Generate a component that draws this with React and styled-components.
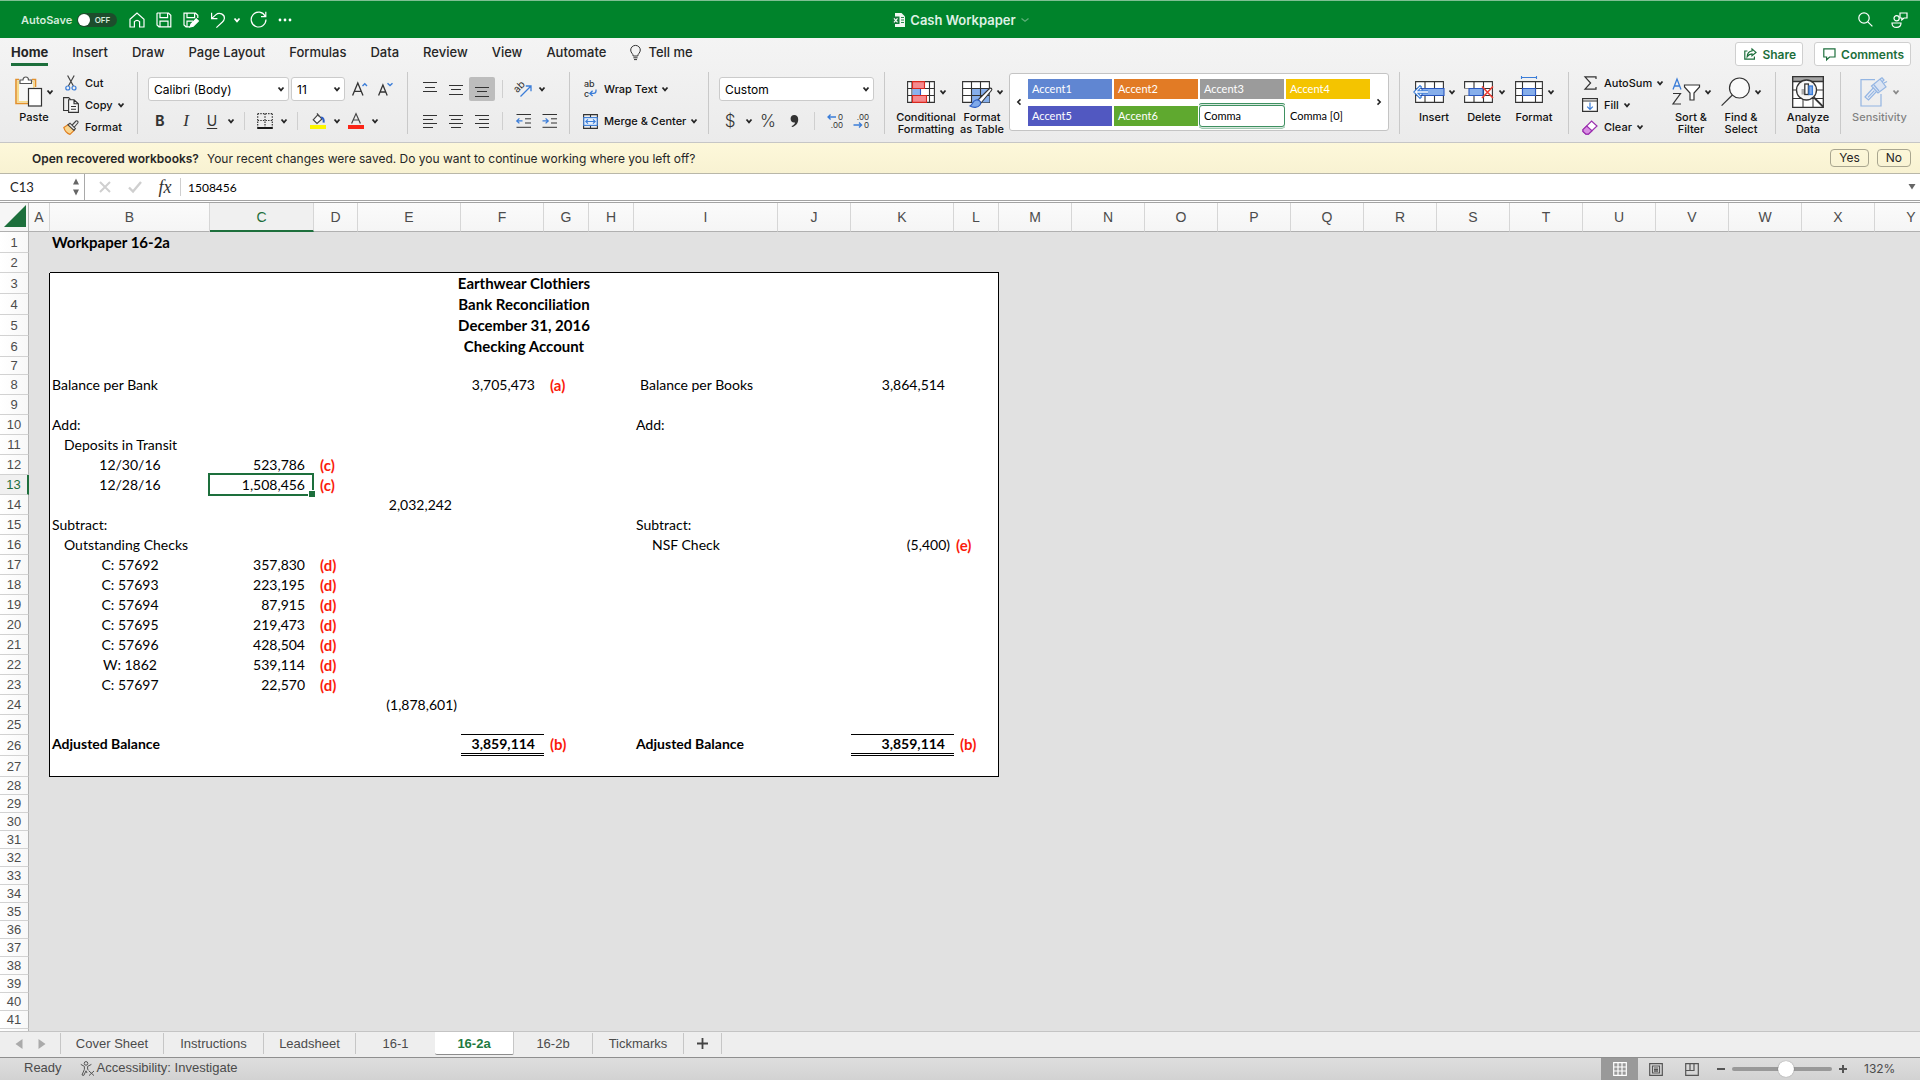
import React from "react";
import styled, { createGlobalStyle } from "styled-components";

const ui = `Inter, Roboto, sans-serif`;
const sheetFont = `Lato, "Open Sans", sans-serif`;
const arial = `"Liberation Sans", Arial, sans-serif`;
const green = "#1d6f3c";
const ink = "#262626";
const blue = "#3b7dd8";

const Global = createGlobalStyle`
  * { box-sizing: border-box; }
  html, body { margin: 0; padding: 0; }
  body { background: #e1e1e1; font-family: ${ui}; color: ${ink}; overflow: hidden; }
  button, input, select { font: inherit; color: inherit; margin: 0; padding: 0; border: 0; background: none; border-radius: 0; outline: 0; }
  svg { display: block; flex: none; overflow: visible; }
`;

const Window = styled.div`
  display: flex;
  flex-direction: column;
  height: 100vh;
  overflow: hidden;
`;

/* ---------- title bar ---------- */
const TitleBar = styled.header`
  flex: none;
  display: grid;
  grid-template-columns: 1fr auto 1fr;
  align-items: center;
  height: 38px;
  padding: 0 12px 0 21px;
  background: #00832b;
  border-top: 1px solid #7fbf93;
  color: #fff;
`;
const TitleSide = styled.div`
  display: flex;
  align-items: center;
  justify-content: ${(p) => (p.$end ? "flex-end" : "flex-start")};
  gap: ${(p) => (p.$end ? "16px" : "9px")};
`;
const AutoSave = styled.label`
  position: relative;
  display: flex;
  align-items: center;
  gap: 5px;
  margin-right: 2px;
  font-size: 11px;
  font-weight: 600;
  color: #d5ecdc;
`;
const Toggle = styled.input`
  appearance: none;
  width: 40px;
  height: 14px;
  border-radius: 7px;
  background: #1d4d2c;
  &::before {
    content: "";
    display: block;
    width: 12px;
    height: 12px;
    margin: 1px;
    border-radius: 50%;
    background: #fff;
  }
`;
const ToggleText = styled.span`
  position: absolute;
  right: 7px;
  font-size: 8px;
  line-height: 14px;
  font-weight: 600;
`;
const BarButton = styled.button`
  display: flex;
  align-items: center;
  justify-content: center;
  width: 18px;
  height: 20px;
`;
const UndoGroup = styled.div`
  display: flex;
  align-items: center;
  gap: 7px;
`;
const UndoMore = styled(BarButton)`
  width: 6px;
`;
const DocTitle = styled.h1`
  display: flex;
  align-items: center;
  gap: 5px;
  margin: 0 8px 0 0;
  font-size: 13px;
  line-height: 18px;
  font-weight: 600;
  color: #dff1e4;
`;

/* ---------- ribbon ---------- */
const RibbonShell = styled.section`
  flex: none;
  background: linear-gradient(#f4f4f4, #ebebeb);
  border-bottom: 1px solid #c6c6c6;
`;
const TabRow = styled.nav`
  display: flex;
  align-items: flex-start;
  height: 34px;
  padding: 4px 9px 0 11px;
  gap: 24px;
`;
const RibbonTab = styled.button`
  display: flex;
  align-items: center;
  gap: 7px;
  height: 24px;
  padding-bottom: 1px;
  font-size: 13px;
  font-weight: ${(p) => (p.$on ? 700 : 500)};
  border-bottom: 3px solid ${(p) => (p.$on ? green : "transparent")};
  white-space: nowrap;
`;
const Spacer = styled.div`
  flex: 1;
`;
const Pills = styled.div`
  display: flex;
  gap: 11px;
`;
const PillButton = styled.button`
  display: flex;
  align-items: center;
  gap: 5px;
  height: 24px;
  padding: 0 6px 0 8px;
  border: 1px solid #cfcfcf;
  border-radius: 3px;
  background: #fff;
  color: ${green};
  font-size: 12px;
  font-weight: 600;
`;
const Ribbon = styled.div`
  display: flex;
  align-items: flex-start;
  height: 70px;
`;
const Group = styled.div`
  flex: none;
  display: flex;
  flex-direction: ${(p) => (p.$stack ? "column" : "row")};
  width: ${(p) => p.$w}px;
  height: 70px;
  padding-left: ${(p) => p.$pl || 0}px;
  gap: ${(p) => p.$gap || 0}px;
  ${(p) => (p.$stack ? "padding-top: 5px; gap: 8px;" : "")}
`;
const Sep = styled.div`
  flex: none;
  width: 1px;
  height: 62px;
  background: #c9c9c9;
`;
const MiniSep = styled.div`
  flex: none;
  width: 1px;
  height: 18px;
  margin: 0 7px;
  background: #cfcfcf;
`;
const Row = styled.div`
  display: flex;
  align-items: center;
  height: 24px;
  padding-left: ${(p) => p.$inset || 0}px;
`;
const Tool = styled.button`
  flex: none;
  display: flex;
  align-items: center;
  justify-content: center;
  width: 26px;
  height: 24px;
  border-radius: 2px;
  font-size: 14px;
  background: ${(p) => (p.$on ? "#bdbdbd" : "none")};
`;
const ChevBox = styled.button`
  flex: none;
  display: flex;
  align-items: center;
  justify-content: center;
  width: 12px;
  height: 24px;
`;
const SelectBox = styled.div`
  position: relative;
  flex: none;
  width: ${(p) => p.$w}px;
  height: 24px;
  margin-right: 2px;
  border: 1px solid #cbcbcb;
  border-radius: 3px;
  background: #fff;
  select {
    appearance: none;
    width: 100%;
    height: 22px;
    padding: 0 20px 0 5px;
    font-size: 12px;
    color: #000;
  }
  svg {
    position: absolute;
    right: 4px;
    top: 9px;
    pointer-events: none;
  }
`;
const SmallCol = styled.div`
  display: flex;
  flex-direction: column;
  width: ${(p) => p.$w}px;
`;
const SmallButton = styled.button`
  display: flex;
  align-items: center;
  height: ${(p) => p.$h || 22}px;
  gap: 1px;
  font-size: 11px;
  font-weight: 500;
  color: #111;
  white-space: nowrap;
  > svg:last-child { margin-left: 4px; }
`;
const IconSlot = styled.span`
  flex: none;
  display: flex;
  align-items: center;
  justify-content: center;
  width: 26px;
`;
const BigButton = styled.button`
  flex: none;
  display: flex;
  flex-direction: column;
  align-items: center;
  width: ${(p) => p.$w}px;
  height: 64px;
  padding-top: 2px;
  font-size: 11px;
  line-height: 12px;
  font-weight: 500;
  color: #111;
  opacity: ${(p) => (p.$dim ? 0.5 : 1)};
  white-space: nowrap;
`;
const BigIcon = styled.span`
  display: flex;
  align-items: center;
  justify-content: center;
  gap: 5px;
  height: 35px;
  margin-bottom: 2px;
`;
const Gallery = styled.div`
  flex: 1;
  display: flex;
  align-items: center;
  height: 58px;
  margin: 1px 10px 0 4px;
  border: 1px solid #c4c4c4;
  border-radius: 3px;
  background: #fff;
`;
const GalleryArrow = styled.button`
  flex: none;
  display: flex;
  align-items: center;
  justify-content: center;
  width: 18px;
  height: 56px;
`;
const Swatches = styled.div`
  flex: 1;
  display: grid;
  grid-template-columns: repeat(4, 1fr);
  gap: 7px 2px;
`;
const Swatch = styled.button`
  height: 20px;
  padding-left: 4px;
  text-align: left;
  font-family: ${sheetFont};
  font-size: 11px;
  color: ${(p) => (p.$bg ? "#fff" : "#000")};
  background: ${(p) => p.$bg || "#fff"};
  ${(p) =>
    p.$on
      ? "border-radius: 2px; box-shadow: 0 0 0 2px #d9e8df, 0 0 0 3px #3f9161; clip-path: inset(-4px -1px -3px -1px round 3px); outline: 1px solid #3f9161;"
      : ""}
`;

/* ---------- recovery message ---------- */
const Notice = styled.section`
  flex: none;
  display: flex;
  align-items: center;
  gap: 8px;
  height: 31px;
  padding: 0 9px 0 32px;
  background: linear-gradient(#fdf8da, #f8f2d2);
  border-bottom: 1px solid #b9b7a8;
  font-size: 12px;
`;
const NoticeTitle = styled.strong`
  font-weight: 600;
`;
const NoticeButton = styled.button`
  height: 18px;
  padding: 0 8px;
  border: 1px solid #a9a68f;
  border-radius: 4px;
  line-height: 16px;
`;

/* ---------- formula bar ---------- */
const FormulaBar = styled.section`
  flex: none;
  display: flex;
  align-items: center;
  height: 29px;
  background: #fff;
  border-bottom: 3px double #a3a3a3;
  font-family: ${sheetFont};
`;
const NameBox = styled.div`
  display: flex;
  align-items: center;
  width: 85px;
  height: 26px;
  padding: 0 4px 0 10px;
  border-right: 1px solid #a9a9a9;
  input { flex: 1; width: 40px; font-size: 13px; color: #222; }
`;
const FormulaIcons = styled.div`
  display: flex;
  align-items: center;
  gap: 2px;
  width: 96px;
  height: 18px;
  margin-right: 7px;
  padding-left: 6px;
  border-right: 1px solid #cfcfcf;
`;
const FormulaIcon = styled.button`
  flex: none;
  display: flex;
  align-items: center;
  justify-content: center;
  width: 28px;
  height: 24px;
`;
const ExpandButton = styled(FormulaIcon)`
  width: 16px;
`;
const FormulaInput = styled.input`
  flex: 1;
  height: 24px;
  font-size: 12px;
  color: #000;
`;

/* ---------- grid ---------- */
const SheetArea = styled.main`
  flex: 1;
  min-height: 0;
  overflow: hidden;
  background: #e1e1e1;
`;
const Grid = styled.table`
  table-layout: fixed;
  width: ${(p) => p.$w}px;
  border-collapse: separate;
  border-spacing: 0;
`;
const Corner = styled.th`
  height: 29px;
  padding: 0 2px 2px 4px;
  background: #f6f6f6;
  border-right: 1px solid #b4b4b4;
  border-bottom: 1px solid #b0b0b0;
`;
const ColHead = styled.th`
  height: 29px;
  padding: 0;
  font-family: ${arial};
  font-size: 14px;
  line-height: 16px;
  font-weight: 400;
  color: ${(p) => (p.$on ? green : "#4c4c4c")};
  background: ${(p) => (p.$on ? "#f0f0f0" : "linear-gradient(#fbfbfb, #f5f5f5)")};
  border-right: 1px solid #d6d6d6;
  border-bottom: ${(p) => (p.$on ? `2px solid ${green}` : "1px solid #b0b0b0")};
`;
const RowHead = styled.th`
  padding: ${(p) => (p.$tall ? 2 : 0)}px 0 0;
  font-family: ${arial};
  font-size: 13px;
  line-height: 14px;
  font-weight: 400;
  color: ${(p) => (p.$on ? green : "#4c4c4c")};
  background: ${(p) => (p.$on ? "#f0f0f0" : "linear-gradient(90deg, #fff, #f8f8f8)")};
  border-right: ${(p) => (p.$on ? `2px solid ${green}` : "1px solid #b4b4b4")};
  border-bottom: 1px solid #d2d2d2;
`;
const Line = styled.tr`
  height: ${(p) => p.$h}px;
`;
const Cell = styled.td`
  padding: 0 ${(p) => p.$pr || 0}px ${(p) => p.$pb || 0}px ${(p) => p.$pl || 0}px;
  font-family: ${sheetFont};
  font-size: ${(p) => (p.$big ? 15 : 14)}px;
  line-height: 16px;
  text-align: ${(p) => p.$align || "left"};
  font-weight: ${(p) => (p.$bold ? 700 : 400)};
  font-variant-ligatures: none;
  color: ${(p) => (p.$tick ? "#fb1b0c" : "#000")};
  white-space: nowrap;
  background: ${(p) => (p.$paper ? "#fff" : "#e1e1e1")};
  ${(p) => (p.$edgeR ? "border-right: 1px solid #000;" : "")}
  ${(p) => (p.$edgeB ? "border-bottom: 1px solid #000;" : "")}
`;
const EdgeTop = styled(Cell)`
  border-bottom: 1px solid #000;
`;
const EdgeLeft = styled(Cell)`
  border-right: 1px solid #000;
`;
const TotalCell = styled(Cell)`
  padding-bottom: 0;
  border-bottom: 3px double #000;
`;
const RuleCell = styled(Cell)`
  border-bottom: 1px solid #000;
`;
const Selected = styled(Cell)`
  position: relative;
  &::before {
    content: "";
    position: absolute;
    inset: -2px 0 -1px -2px;
    border: 2px solid ${green};
  }
  &::after {
    content: "";
    position: absolute;
    right: -1px;
    bottom: -2px;
    width: 6px;
    height: 6px;
    background: ${green};
    border: solid #fff;
    border-width: 1px 0 0 1px;
  }
`;

/* ---------- sheet tabs and status bar ---------- */
const SheetTabs = styled.nav`
  flex: none;
  display: flex;
  height: 26px;
  background: #eee;
  border-top: 1px solid #c4c4c4;
`;
const TabArrows = styled.div`
  display: flex;
  align-items: center;
  justify-content: center;
  gap: 15px;
  width: 61px;
  height: 21px;
  margin-top: 1px;
  border-right: 1px solid #c6c6c6;
`;
const SheetTab = styled.button`
  height: ${(p) => (p.$on ? 23 : 21)}px;
  margin-top: ${(p) => (p.$on ? 0 : 1)}px;
  min-width: ${(p) => p.$w}px;
  padding: 0 12px;
  font-family: ${arial};
  font-size: 13px;
  line-height: 21px;
  font-weight: ${(p) => (p.$on ? 700 : 400)};
  color: ${(p) => (p.$on ? "#1f7a41" : "#4b4b4b")};
  background: ${(p) => (p.$on ? "#fff" : "none")};
  border-right: 1px solid #c6c6c6;
  ${(p) => (p.$on ? "border-bottom: 1px solid #8d8d8d; border-radius: 0 0 2px 2px; margin-left: -1px;" : "")}
  svg { margin: 0 auto; }
`;
const StatusBar = styled.footer`
  flex: none;
  display: flex;
  align-items: center;
  height: 23px;
  padding: 0 24px;
  background: linear-gradient(#dedede, #d2d2d2);
  border-top: 1px solid #8f8f8f;
  font-family: ${arial};
  font-size: 13px;
  line-height: 14px;
  color: #4b4b4b;
`;
const StatusText = styled.div`
  display: flex;
  align-items: center;
  gap: 18px;
  padding-bottom: 2px;
`;
const StatusItem = styled.button`
  display: flex;
  align-items: center;
  gap: 2px;
`;
const ViewButton = styled.button`
  display: flex;
  align-items: center;
  justify-content: center;
  width: ${(p) => (p.$on ? 37 : 36)}px;
  height: 22px;
  color: ${(p) => (p.$on ? "#fff" : "#555")};
  background: ${(p) => (p.$on ? "#999" : "none")};
`;
const ZoomButton = styled.button`
  display: flex;
  align-items: center;
  justify-content: center;
  width: 22px;
  height: 22px;
`;
const Zoom = styled.input`
  appearance: none;
  width: 100px;
  height: 4px;
  border-radius: 2px;
  background: #999;
  &::-webkit-slider-thumb {
    appearance: none;
    width: 16px;
    height: 16px;
    border-radius: 50%;
    background: #fff;
    box-shadow: 0 0 1px rgba(0, 0, 0, 0.5);
  }
`;
const ZoomValue = styled.output`
  width: 42px;
  padding-left: 10px;
  font-family: ${ui};
  font-size: 12px;
`;

/* ---------- icons ---------- */
const Svg = ({ w, h, children, s = "currentColor", sw = 1.2, ...r }) => (
  <svg width={w} height={h} viewBox={`0 0 ${w} ${h}`} fill="none" stroke={s} strokeWidth={sw} aria-hidden="true" {...r}>
    {children}
  </svg>
);
const Chev = ({ c = "#262626", w = 6, sw = 1.8 }) => (
  <Svg w={w} h={4} s={c} sw={sw}><path d={`M.5 .5 L${w / 2} 3.3 L${w - 0.5} .5`} /></Svg>
);
const HomeI = () => <Svg w={16} h={16}><path d="M1 7.2 L8 1 L15 7.2 V15 H10.6 V9.6 Q8 7 5.4 9.6 V15 H1 Z" /></Svg>;
const SaveI = () => <Svg w={16} h={16}><path d="M1.5 1 H12.5 L14.8 3.3 V14.8 H3 L1 13 V1.5 Z M4 1 V5.6 H11.6 V1 M4 14.8 V9.2 H12 V14.8" /></Svg>;
const SaveEditI = () => <Svg w={16} h={16}><path d="M7 14.8 H3 L1 13 V1.2 H12.5 L14.8 3.3 V6 M4 1 V5.6 H11.6 V1 M4 14.8 V9.2 H10" /><path d="M7 15 L8 12 L13.2 6.8 L15.4 9 L10.2 14.2 Z" fill="#fff" /></Svg>;
const UndoI = () => <Svg w={16} h={16}><path d="M1.6 .8 V6.6 H7.4 M1.8 6.4 L6 2.6 C9.4 -.4 14.8 2.4 14.4 6.4 C14.2 8 13.4 9 12.4 10 L6.4 15.6" /></Svg>;
const RedoI = () => <Svg w={17} h={17}><path d="M15.2 5.2 A7.4 7.4 0 1 0 16 8.6 M15.8 .8 V5.6 H11" /></Svg>;
const DotsI = () => <Svg w={14} h={4} s="none"><g fill="#fff"><circle cx="2" cy="2" r="1.4" /><circle cx="7" cy="2" r="1.4" /><circle cx="12" cy="2" r="1.4" /></g></Svg>;
const XlI = () => (
  <Svg w={13} h={14} s="none"><path d="M3 0 H9.5 L13 3.5 V14 H3 Z" fill="#f1f8f3" /><path d="M9 4.5 h3 M9 7 h3 M9 9.5 h3" stroke="#2a8a4c" /><rect x="0" y="3.5" width="7.5" height="7.5" fill="#157a3a" /><path d="M2 5.3 L5.5 9.3 M5.5 5.3 L2 9.3" stroke="#fff" /></Svg>
);
const SearchI = () => <Svg w={15} h={15}><circle cx="6" cy="6" r="5.2" /><path d="M9.8 9.8 L14.4 14.4" /></Svg>;
const PeopleI = () => <Svg w={17} h={16}><circle cx="5.6" cy="6.2" r="2.6" /><path d="M1 11 H10 C10 14 8.4 15.4 5.5 15.4 C2.6 15.4 1 14 1 11 Z M9 1 H16 V6 H13 L10.8 8 V6 H9 Z" /></Svg>;
const BulbI = () => <Svg w={11} h={15} s="#333" sw={1}><path d="M3.2 11 C3.2 8.6 .7 8 .7 5 A4.8 4.6 0 0 1 10.3 5 C10.3 8 7.8 8.6 7.8 11 Z M3.4 12.8 H7.6 M4 14.6 H7" /></Svg>;
const ShareI = () => <Svg w={13} h={12}><path d="M3.4 3 H.8 V11.2 H10.4 V8.6 M8 1 L12 4.4 L8 7.8 V5.8 C5.6 5.8 4.4 6.8 3.2 8.6 C3.4 5.2 5.2 3.2 8 3 Z" /></Svg>;
const CommentI = () => <Svg w={13} h={13}><path d="M.8 .8 H12 V9 H6.6 L3.6 11.8 V9 H.8 Z" /></Svg>;

const PasteI = () => (
  <Svg w={27} h={31}><path d="M4 3.5 H1 V27.5 H13 M17 3.5 H20.5 V11" stroke="#e3912c" strokeWidth="1.6" /><path d="M2 5 H19.5 V12 H13 V26.5 H2 Z" fill="#f7dc8c" stroke="none" /><rect x="4" y="6" width="14" height="19" fill="#f7f7f7" stroke="none" /><path d="M5 7.5 V4 H8 C8 0 13.5 0 13.5 4 H16.5 V7.5 Z" fill="#fff" stroke="#555" /><rect x="13.5" y="12.5" width="13" height="17.5" fill="#fff" stroke="#333" /></Svg>
);
const CutI = () => <Svg w={12} h={16} s="#444"><path d="M2.6 .5 L8.4 11 M9.2 .5 L3.4 11" /><circle cx="2.8" cy="13" r="2" stroke={blue} /><circle cx="9" cy="13" r="2" stroke={blue} /></Svg>;
const CopyI = () => <Svg w={16} h={16} s="#333" sw={1.1}><path d="M5 13.5 H.6 V.6 H5.6 L8 3" /><path d="M5.6 2.8 H11 L15.4 6.8 V15.4 H5.6 Z M11 2.8 V6.8 H15.4 M8 9.5 H13 M8 12.2 H13" fill="#f8f8f8" /></Svg>;
const BrushI = () => <Svg w={16} h={15} s="#444" sw={1.1}><path d="M.8 7.5 L5 4.8 L11 10.4 L7 14.4 C4.4 13.6 1.8 11 .8 7.5 Z" fill="#f9d58e" stroke="#e07f1f" /><path d="M5 4.8 L7 3.2 L12.4 8.6 L11 10.4 Z M9.2 5 L13 1 C14 .2 15.8 1.8 14.8 3 L11.4 7" fill="#eee" /></Svg>;

const GrowA = ({ d }) => (
  <Svg w={16} h={14} s="none"><path d={d ? "M.6 13.5 L4.9 3 L9.2 13.5 M2 10 H7.8" : "M.6 13.5 L5.8 1 L11 13.5 M2.4 9.4 H9.2"} stroke="#333" strokeWidth="1.3" /><path d={d ? "M9.5 1.2 L12 3.5 L14.5 1.2" : "M10.5 4 L12.8 1.8 L15 4"} stroke={blue} strokeWidth="1.4" /></Svg>
);
const BorderI = () => <Svg w={16} h={16} s="#333"><path d="M.7 .7 H15.3 M.7 .7 V14 M15.3 .7 V14 M8 .7 V14 M.7 7.5 H15.3" strokeDasharray="1.4 1.2" /><path d="M.2 15 H15.8" stroke="#000" strokeWidth="1.8" /></Svg>;
const FillI = () => <Svg w={16} h={16} s="#444"><rect x="0" y="12" width="16" height="4" fill="#fdf600" stroke="none" /><path d="M3.2 6.8 L8 1.6 L12 6 L7 10.4 Z M7 .4 L9 3.4" fill="#fafafa" /><path d="M11 4.5 C13.5 4.5 14 7 13.6 9.6" stroke="#2f5fc4" strokeWidth="2" /></Svg>;
const FontColorI = () => <Svg w={16} h={16} s="#444"><rect x="0" y="12" width="16" height="4" fill="#fb2517" stroke="none" /><path d="M3.6 10.4 L8 .6 L12.4 10.4 M5.2 7 H10.8" /></Svg>;
const Lines = ({ rows }) => (
  <Svg w={15} h={15} s="#333" sw={1}>{rows.map(([x1, x2, y], i) => <path key={i} d={`M${x1} ${y}.5 H${x2}`} />)}</Svg>
);
const OrientI = () => <Svg w={17} h={17} s="none"><text x="0" y="9" transform="rotate(-45 5 8)" fontSize="10" fontFamily="Inter" fill="#333">ab</text><path d="M5.5 15.5 L15.5 5.5 M10.8 5 H16 V10.2" stroke={blue} strokeWidth="1.3" /></Svg>;
const Indent = ({ flip }) => (
  <Svg w={15} h={14} s="#333" sw={1}><path d="M.5 .5 H15 M9 4.8 H15 M9 9 H15 M.5 13.3 H15" /><path d={flip ? "M.5 6.9 H6 M3.6 4.4 L6.2 6.9 L3.6 9.4" : "M6.5 6.9 H1 M3.4 4.4 L.8 6.9 L3.4 9.4"} stroke={blue} strokeWidth="1.3" /></Svg>
);
const WrapI = () => (
  <Svg w={15} h={16} s="none">
    <g fontSize="9" fontFamily="Inter" fill="#333"><text x="1" y="6">ab</text><text x="1" y="16">c</text></g>
    <path d="M13 8.5 V10 Q13 12.4 10.6 12.4 H7 M9.6 9.8 L6.8 12.4 L9.6 15" stroke={blue} strokeWidth="1.3" />
  </Svg>
);
const MergeI = () => <Svg w={15} h={15} s="#333" sw={1.1}><path d="M.6 .6 H14.4 V14.4 H.6 Z M7.5 .6 V3.5 M7.5 11.5 V14.4" /><rect x=".8" y="3.6" width="13.4" height="7.8" fill="#e3eefc" stroke={blue} /><path d="M3 7.5 H12 M5 5.4 L2.8 7.5 L5 9.6 M10 5.4 L12.2 7.5 L10 9.6" stroke={blue} /></Svg>;
const Glyph = styled.span`
  font-size: ${(p) => p.$s}px;
  line-height: 20px;
  font-weight: ${(p) => p.$wt || 300};
  font-style: ${(p) => (p.$i ? "italic" : "normal")};
  font-family: ${(p) => (p.$serif ? `"Liberation Serif", serif` : ui)};
  text-decoration: ${(p) => (p.$u ? "underline" : "none")};
  text-underline-offset: 2px;
  color: #333;
`;
const CommaI = () => <Svg w={9} h={12} s="none"><path d="M4.2 0 C6.8 0 8.2 1.8 8.2 4.4 C8.2 8.4 5.6 11 2 12 L1.6 11 C3.6 10.2 4.8 9 5 7.4 C2.4 8 .6 6.2 .6 3.8 C.6 1.6 2 0 4.2 0 Z" fill="#333" /></Svg>;
const DecI = ({ less }) => (
  <Svg w={16} h={16} s="none">
    <text x="16" y="7" textAnchor="end" fontSize="8" fontFamily="Inter" fill="#333">{less ? ".00" : "0"}</text>
    <text x="16" y="15" textAnchor="end" fontSize="8" fontFamily="Inter" fill="#333">{less ? "0" : ".00"}</text>
    <path d={less ? "M.5 12 H8.5 M6 9.5 L8.6 12 L6 14.5" : "M9 4 H1 M3.6 1.5 L1 4 L3.6 6.5"} stroke={blue} strokeWidth="1.3" />
  </Svg>
);
const CondI = () => <Svg w={28} h={22} s="#333" sw={1.1}><path d="M.6 .6 H27.4 V21.4 H.6 Z M5 .6 V21.4 M22.5 .6 V21.4 M.6 7.5 H27.4 M.6 14.5 H27.4" fill="#fff" /><path d="M5.5 .6 H17.5 V7.5 H5.5 Z M5.5 14.5 H19.5 V21.4 H5.5 Z" fill="#f58a8f" stroke="#d9281e" /><path d="M5.5 8 H13.5 V14 H5.5 Z" fill="#8ab2ee" stroke="none" /><path d="M13.5 8 V14" stroke="#2a58c0" /></Svg>;
const FmtTableI = () => <Svg w={30} h={28} s="#333" sw={1.1}><path d="M.6 3.6 H27.4 V24.4 H.6 Z" fill="#fff" /><path d="M10 10.5 H27.4 V24.4 H10 Z" fill="#86aeea" stroke="none" /><path d="M.6 10.5 H27.4 M.6 17.5 H27.4 M9.5 3.6 V24.4 M18.5 3.6 V24.4" /><path d="M16 22 L27 11 C29 9 31 11 29 13 L19 25 Z" fill="#fff" /><path d="M8 28 C11 27 10 23 14 22 C17 21.5 20 24 18 27 C16 30 11 30 8 28 Z" fill="#7fa9ea" stroke="#2f5fc4" /></Svg>;
const GridBase = () => <path d="M2.6 5.6 H30.4 V26.4 H2.6 Z M2.6 12.5 H30.4 M2.6 19.5 H30.4 M12 5.6 V26.4 M21.5 5.6 V26.4" fill="#fff" />;
const InsertI = () => <Svg w={31} h={32} s="#333" sw={1.1}><GridBase /><path d="M9 12.5 H31 V19.5 H9 Z" fill="#86aeea" stroke="#2a58c0" /><path d="M15 14.8 H5 L8.5 11 L7 9.6 L.8 16 L7 22.4 L8.5 21 L5 17.2 H15" fill="#fff" stroke={blue} /></Svg>;
const DeleteI = () => <Svg w={30} h={32} s="#333" sw={1.1}><g transform="translate(-2 0)"><GridBase /></g><path d="M0 12.5 V19.5 H5 V12.5 Z" fill="#eee" stroke="none" /><path d="M5 12.5 H19 V19.5 H5 Z" fill="#86aeea" stroke="#2a58c0" /><path d="M18 10.5 L29 22 M29 10.5 L18 22" stroke="#ee4035" strokeWidth="1.6" /></Svg>;
const FormatI = () => <Svg w={28} h={32} s="#333" sw={1.1}><path d="M.6 5.6 H27.4 V26.4 H.6 Z M.6 12.5 H27.4 M.6 19.5 H27.4 M7.5 5.6 V26.4 M20.5 5.6 V26.4" fill="#fff" /><path d="M7.5 12.5 H20.5 V19.5 H7.5 Z" fill="#86aeea" stroke="#2a58c0" /><path d="M6.5 1.5 H21.5 M6.5 0 V3 M21.5 0 V3" stroke={blue} /></Svg>;
const SigmaI = () => <Svg w={13} h={14} s="#333"><path d="M12 3 V.8 H1 L6.6 7 L1 13.2 H12 V11" /></Svg>;
const FillDownI = () => <Svg w={16} h={14} s="#333"><path d="M.6 .6 H15.4 V13.4 H.6 Z M.6 3 H15.4" fill="#fff" /><path d="M8 4.5 V11 M5.2 8.6 L8 11.4 L10.8 8.6" stroke={blue} /></Svg>;
const ClearI = () => <Svg w={16} h={15} s="#9a2fae"><path d="M1 9.6 L9.6 1 L15 6 L6.4 14.2 H4 L1 11.4 Z" fill="#fff" /><path d="M1 9.6 L4.8 6 L10 10.8 L6.4 14.2 H4 L1 11.4 Z" fill="#d98fe3" /></Svg>;
const SortI = () => <Svg w={28} h={27} s="none"><path d="M1 11.5 L5 1 L9 11.5 M2.4 8 H7.6" stroke={blue} strokeWidth="1.3" /><path d="M1 15.5 H8.5 L1 26 H9" stroke="#333" strokeWidth="1.2" /><path d="M12.5 7 H27.5 V9 L22 15 V22 H18 V15 L12.5 9 Z" stroke="#333" strokeWidth="1.2" fill="#fff" /></Svg>;
const FindI = () => <Svg w={29} h={29} s="#333"><circle cx="18.5" cy="11" r="10" fill="#fafafa" /><path d="M11.4 18 L.6 28.6" /></Svg>;
const AnalyzeI = () => <Svg w={32} h={32} s="#333" sw={1.3}><path d="M.7 .7 H31.3 V31.3 H.7 Z" fill="#fff" /><path d="M.7 .7 H31.3 V5.5 H.7 Z" fill="#a5a5a5" /><path d="M.7 14 H31 M.7 22.5 H31 M11 22 V31 M21 22 V31" strokeWidth="1" /><circle cx="14.5" cy="14" r="10" fill="#f6f6f6" /><path d="M21.8 21.4 L31 30.6" strokeWidth="2" /><rect x="9.5" y="13" width="3" height="5.5" fill="#aaa" stroke="none" /><rect x="12.8" y="8" width="3.6" height="10.5" fill="#fff" /><rect x="17" y="10" width="3.4" height="8.5" fill="#86aeea" stroke={blue} /></Svg>;
const SensI = () => <Svg w={28} h={30} s={blue}><path d="M15 2.6 H1 V29 H21 V17" /><path d="M5 20 L14 10 L17.5 13.5 L8.5 23 Z M8 20.4 L14.4 13.6" fill="#dfe9fa" /><path d="M11.5 9 L20 2 L26 10 L18 16 Z M14 8 L19 14 M20 2 L22 .8 L24 3 L22 5 M24 6 L27 4.5" fill="#cadbf7" /></Svg>;

const FigureI = () => <Svg w={15} h={15} s="#555" sw={1}><circle cx="6" cy="2.4" r="1.8" /><path d="M.8 3.4 L4.4 5.4 V8.4 L2 14 L3.8 14.4 L6 9.8 L7 12 M11.4 3.4 L7.6 5.4 V8 L8.4 9.4 M9 10 L14 14.6 M14 10 L9 14.6" /></Svg>;

/* ---------- data ---------- */
const columns = [
  ["A", 21], ["B", 160], ["C", 104], ["D", 44], ["E", 103], ["F", 83], ["G", 45], ["H", 45],
  ["I", 144], ["J", 73], ["K", 103], ["L", 45],
  ..."MNOPQRSTUVWXY".split("").map((c) => [c, 73]),
];
const tableWidth = 29 + columns.reduce((s, c) => s + c[1], 0);

const rowHeight = (n) => {
  if ([1, 3, 4, 5, 6, 26, 27].includes(n)) return 21;
  if (n === 7 || n >= 28) return 18;
  return 20;
};

const label = (t, pl = 2, bold) => ({ t, pl, bold });
const mid = (t) => ({ t, align: "center" });
const num = (t, bold) => ({ t, align: "right", pr: 9, bold });
const neg = (t, pr = 4) => ({ t, align: "right", pr });
const tick = (t, pl = 6) => ({ t, pl, bold: true, tick: true, big: true });

const data = {
  8: { B: label("Balance per Bank"), F: num("3,705,473"), G: tick("(a)"), I: label("Balance per Books", 6), K: num("3,864,514") },
  10: { B: label("Add:"), I: label("Add:") },
  11: { B: label("Deposits in Transit", 14) },
  12: { B: mid("12/30/16"), C: num("523,786"), D: tick("(c)") },
  13: { B: mid("12/28/16"), C: num("1,508,456"), D: tick("(c)") },
  14: { E: num("2,032,242") },
  15: { B: label("Subtract:"), I: label("Subtract:") },
  16: { B: label("Outstanding Checks", 14), I: label("NSF Check", 18), K: neg("(5,400)"), L: tick("(e)", 2) },
  17: { B: mid("C: 57692"), C: num("357,830"), D: tick("(d)") },
  18: { B: mid("C: 57693"), C: num("223,195"), D: tick("(d)") },
  19: { B: mid("C: 57694"), C: num("87,915"), D: tick("(d)") },
  20: { B: mid("C: 57695"), C: num("219,473"), D: tick("(d)") },
  21: { B: mid("C: 57696"), C: num("428,504"), D: tick("(d)") },
  22: { B: mid("W: 1862"), C: num("539,114"), D: tick("(d)") },
  23: { B: mid("C: 57697"), C: num("22,570"), D: tick("(d)") },
  24: { E: neg("(1,878,601)") },
  26: { B: label("Adjusted Balance", 2, true), F: num("3,859,114", true), G: tick("(b)"), I: label("Adjusted Balance", 2, true), K: num("3,859,114", true), L: tick("(b)") },
};
const headings = { 3: "Earthwear Clothiers", 4: "Bank Reconciliation", 5: "December 31, 2016", 6: "Checking Account" };

const inPaper = (n, c) => n >= 3 && n <= 27 && c >= "B" && c <= "L";

function SheetRow({ n }) {
  const head = <RowHead scope="row" $on={n === 13} $tall={rowHeight(n) === 21}>{n < 42 ? n : null}</RowHead>;
  if (n === 1) {
    return (
      <Line $h={21}>{head}<Cell /><Cell colSpan={3} $bold $big $pl={2} $pb={2}>Workpaper 16-2a</Cell><Cell colSpan={21} /></Line>
    );
  }
  if (n === 2) {
    return <Line $h={20}>{head}<Cell /><EdgeTop colSpan={11} /><Cell colSpan={13} /></Line>;
  }
  if (headings[n]) {
    return (
      <Line $h={21}>{head}<EdgeLeft /><Cell colSpan={11} $paper $bold $big $align="center" $pb={2} $edgeR>{headings[n]}</Cell><Cell colSpan={13} /></Line>
    );
  }
  if (n > 27) return <Line $h={18}>{head}<Cell colSpan={25} /></Line>;
  return (
    <Line $h={rowHeight(n)}>
      {head}
      {columns.map(([c]) => {
        if (c > "M") return null;
        if (c === "M") return <Cell key={c} colSpan={13} />;
        const d = (data[n] || {})[c] || {};
        let Kind = Cell;
        if (c === "A") Kind = EdgeLeft;
        else if (n === 13 && c === "C") Kind = Selected;
        else if (n === 26 && (c === "F" || c === "K")) Kind = TotalCell;
        else if (n === 25 && (c === "F" || c === "K")) Kind = RuleCell;
        return (
          <Kind key={c} $paper={inPaper(n, c)} $pl={d.pl} $pr={d.pr} $pb={n === 26 ? 3 : 0} $align={d.align}
            $bold={d.bold} $tick={d.tick} $big={d.big} $edgeR={c === "L"} $edgeB={n === 27 && inPaper(n, c)}>
            {d.t}
          </Kind>
        );
      })}
    </Line>
  );
}

const swatches = [
  ["Accent1", "#6086d2"], ["Accent2", "#e27b25"], ["Accent3", "#9b9b9b"], ["Accent4", "#f4c400"],
  ["Accent5", "#5158c1"], ["Accent6", "#5fa92f"], ["Comma", null], ["Comma [0]", null],
];

function Big({ w, icon, lines, dim, noChev }) {
  return (
    <BigButton $w={w} $dim={dim} disabled={dim}>
      <BigIcon>{icon}{!noChev && <Chev />}</BigIcon>
      {lines.map((l) => <span key={l}>{l}</span>)}
    </BigButton>
  );
}
const Drop = ({ name }) => <ChevBox aria-label={name}><Chev /></ChevBox>;
function Picker({ w, value, name }) {
  return (
    <SelectBox $w={w}><select aria-label={name} defaultValue={value}><option>{value}</option></select><Chev /></SelectBox>
  );
}

export default function App() {
  return (
    <Window>
      <Global />
      <TitleBar>
        <TitleSide>
          <AutoSave>AutoSave<Toggle type="checkbox" /><ToggleText>OFF</ToggleText></AutoSave>
          <BarButton aria-label="Home"><HomeI /></BarButton>
          <BarButton aria-label="Save"><SaveI /></BarButton>
          <BarButton aria-label="Save as"><SaveEditI /></BarButton>
          <UndoGroup>
            <BarButton aria-label="Undo"><UndoI /></BarButton>
            <UndoMore aria-label="Undo history"><Chev c="#fff" /></UndoMore>
          </UndoGroup>
          <BarButton aria-label="Repeat"><RedoI /></BarButton>
          <BarButton aria-label="More"><DotsI /></BarButton>
        </TitleSide>
        <DocTitle><XlI />Cash Workpaper<Chev c="#5fb07a" w={8} sw={1.2} /></DocTitle>
        <TitleSide $end>
          <BarButton aria-label="Search"><SearchI /></BarButton>
          <BarButton aria-label="Presence"><PeopleI /></BarButton>
        </TitleSide>
      </TitleBar>

      <RibbonShell>
        <TabRow>
          {["Home", "Insert", "Draw", "Page Layout", "Formulas", "Data", "Review", "View", "Automate"].map((t) => (
            <RibbonTab key={t} $on={t === "Home"}>{t}</RibbonTab>
          ))}
          <RibbonTab><BulbI />Tell me</RibbonTab>
          <Spacer />
          <Pills>
            <PillButton><ShareI />Share</PillButton>
            <PillButton><CommentI />Comments</PillButton>
          </Pills>
        </TabRow>
        <Ribbon>
          <Group $w={137} $pl={12} $gap={2}>
            <Big w={44} icon={<PasteI />} lines={["Paste"]} />
            <SmallCol $w={79}>
              <SmallButton><IconSlot><CutI /></IconSlot>Cut</SmallButton>
              <SmallButton><IconSlot><CopyI /></IconSlot>Copy<Chev /></SmallButton>
              <SmallButton><IconSlot><BrushI /></IconSlot>Format</SmallButton>
            </SmallCol>
          </Group>
          <Sep />
          <Group $w={269} $pl={9} $stack>
            <Row $inset={1}>
              <Picker w={141} value="Calibri (Body)" name="Font" />
              <Picker w={54} value="11" name="Font size" />
              <Tool aria-label="Increase font size"><GrowA /></Tool>
              <Tool aria-label="Decrease font size"><GrowA d /></Tool>
            </Row>
            <Row>
              <Tool aria-label="Bold"><Glyph $s={14} $wt={700}>B</Glyph></Tool>
              <Tool aria-label="Italic"><Glyph $s={17} $i $serif $wt={400}>I</Glyph></Tool>
              <Tool aria-label="Underline"><Glyph $s={14} $u $wt={400}>U</Glyph></Tool>
              <Drop name="Underline style" />
              <MiniSep />
              <Tool aria-label="Borders"><BorderI /></Tool><Drop name="Border style" />
              <MiniSep />
              <Tool aria-label="Fill color"><FillI /></Tool><Drop name="Fill colors" />
              <Tool aria-label="Font color"><FontColorI /></Tool><Drop name="Font colors" />
            </Row>
          </Group>
          <Sep />
          <Group $w={161} $pl={9} $stack>
            <Row>
              <Tool aria-label="Top align"><Lines rows={[[0, 14, 0], [2, 12, 5], [0, 14, 9]]} /></Tool>
              <Tool aria-label="Middle align"><Lines rows={[[0, 14, 3], [2, 12, 7], [0, 14, 12]]} /></Tool>
              <Tool $on aria-label="Bottom align"><Lines rows={[[0, 14, 5], [2, 12, 9], [0, 14, 14]]} /></Tool>
              <MiniSep />
              <Tool aria-label="Orientation"><OrientI /></Tool><Drop name="Orientation options" />
            </Row>
            <Row>
              <Tool aria-label="Align left"><Lines rows={[[0, 14, 1], [0, 10, 5], [0, 14, 9], [0, 10, 13]]} /></Tool>
              <Tool aria-label="Center"><Lines rows={[[0, 14, 1], [2, 12, 5], [0, 14, 9], [2, 12, 13]]} /></Tool>
              <Tool aria-label="Align right"><Lines rows={[[0, 14, 1], [4, 14, 5], [0, 14, 9], [4, 14, 13]]} /></Tool>
              <MiniSep />
              <Tool aria-label="Decrease indent"><Indent /></Tool>
              <Tool aria-label="Increase indent"><Indent flip /></Tool>
            </Row>
          </Group>
          <Sep />
          <Group $w={138} $pl={7} $stack>
            <SmallButton $h={24}><IconSlot><WrapI /></IconSlot>Wrap Text<Chev /></SmallButton>
            <SmallButton $h={24}><IconSlot><MergeI /></IconSlot>Merge &amp; Center<Chev /></SmallButton>
          </Group>
          <Sep />
          <Group $w={175} $pl={8} $stack>
            <Row $inset={2}><Picker w={155} value="Custom" name="Number format" /></Row>
            <Row>
              <Tool aria-label="Currency"><Glyph $s={17}>$</Glyph></Tool><Drop name="Currency options" />
              <Tool aria-label="Percent"><Glyph $s={17}>%</Glyph></Tool>
              <Tool aria-label="Comma style"><CommaI /></Tool>
              <MiniSep />
              <Tool aria-label="Increase decimal"><DecI /></Tool>
              <Tool aria-label="Decrease decimal"><DecI less /></Tool>
            </Row>
          </Group>
          <Sep />
          <Group $w={120} $pl={8}>
            <Big w={66} icon={<CondI />} lines={["Conditional", "Formatting"]} />
            <Big w={46} icon={<FmtTableI />} lines={["Format", "as Table"]} />
          </Group>
          <Gallery>
            <GalleryArrow aria-label="Previous styles"><Svg w={4} h={6} s="#222" sw={1.5}><path d="M3.5 .4 L.8 3 L3.5 5.6" /></Svg></GalleryArrow>
            <Swatches>
              {swatches.map(([t, bg]) => <Swatch key={t} $bg={bg} $on={t === "Comma"}>{t}</Swatch>)}
            </Swatches>
            <GalleryArrow aria-label="More styles"><Svg w={4} h={6} s="#222" sw={1.5}><path d="M.5 .4 L3.2 3 L.5 5.6" /></Svg></GalleryArrow>
          </Gallery>
          <Sep />
          <Group $w={168} $pl={9}>
            <Big w={50} icon={<InsertI />} lines={["Insert"]} />
            <Big w={50} icon={<DeleteI />} lines={["Delete"]} />
            <Big w={50} icon={<FormatI />} lines={["Format"]} />
          </Group>
          <Sep />
          <Group $w={206} $pl={8}>
            <SmallCol $w={89}>
              <SmallButton><IconSlot><SigmaI /></IconSlot>AutoSum<Chev /></SmallButton>
              <SmallButton><IconSlot><FillDownI /></IconSlot>Fill<Chev /></SmallButton>
              <SmallButton><IconSlot><ClearI /></IconSlot>Clear<Chev /></SmallButton>
            </SmallCol>
            <Big w={50} icon={<SortI />} lines={["Sort &", "Filter"]} />
            <Big w={50} icon={<FindI />} lines={["Find &", "Select"]} />
          </Group>
          <Sep />
          <Group $w={64}><Big w={64} icon={<AnalyzeI />} lines={["Analyze", "Data"]} noChev /></Group>
          <Sep />
          <Group $w={79}><Big w={77} icon={<SensI />} lines={["Sensitivity"]} dim /></Group>
        </Ribbon>
      </RibbonShell>

      <Notice>
        <NoticeTitle>Open recovered workbooks?</NoticeTitle>
        <span>Your recent changes were saved. Do you want to continue working where you left off?</span>
        <Spacer />
        <NoticeButton>Yes</NoticeButton>
        <NoticeButton>No</NoticeButton>
      </Notice>

      <FormulaBar>
        <NameBox>
          <input aria-label="Name box" defaultValue="C13" />
          <Svg w={8} h={18} s="none"><path d="M1 6.5 L4 .5 L7 6.5 Z M1 11.5 L4 17.5 L7 11.5 Z" fill="#666" /></Svg>
        </NameBox>
        <FormulaIcons>
          <FormulaIcon aria-label="Cancel"><Svg w={12} h={12} s="#cfcfcf" sw={2}><path d="M1 1 L11 11 M11 1 L1 11" /></Svg></FormulaIcon>
          <FormulaIcon aria-label="Enter"><Svg w={14} h={12} s="#cfcfcf" sw={2.4}><path d="M1 6.5 L5 10.5 L13 1" /></Svg></FormulaIcon>
          <FormulaIcon aria-label="Insert function"><Glyph $s={18} $i $serif $wt={400}>fx</Glyph></FormulaIcon>
        </FormulaIcons>
        <FormulaInput aria-label="Formula" defaultValue="1508456" />
        <ExpandButton aria-label="Expand formula bar"><Svg w={8} h={6} s="none"><path d="M.5 0 H7.5 L4 5.5 Z" fill="#666" /></Svg></ExpandButton>
      </FormulaBar>

      <SheetArea>
        <Grid $w={tableWidth}>
          <colgroup>
            <col width={29} />
            {columns.map(([c, w]) => <col key={c} width={w} />)}
          </colgroup>
          <thead>
            <tr>
              <Corner aria-label="Select all"><Svg w={22} h={22} s="none"><path d="M22 0 V22 H0 Z" fill={green} /></Svg></Corner>
              {columns.map(([c]) => <ColHead key={c} scope="col" $on={c === "C"}>{c}</ColHead>)}
            </tr>
          </thead>
          <tbody>
            {Array.from({ length: 42 }, (_, i) => <SheetRow key={i} n={i + 1} />)}
          </tbody>
        </Grid>
      </SheetArea>

      <SheetTabs>
        <TabArrows>
          <Svg w={8} h={10} s="none"><path d="M7.5 0 V10 L.5 5 Z" fill="#aaa" /></Svg>
          <Svg w={8} h={10} s="none"><path d="M.5 0 V10 L7.5 5 Z" fill="#aaa" /></Svg>
        </TabArrows>
        {[["Cover Sheet", 103], ["Instructions", 100], ["Leadsheet", 92], ["16-1", 80], ["16-2a", 79], ["16-2b", 79], ["Tickmarks", 91]].map(([t, w]) => (
          <SheetTab key={t} $w={w} $on={t === "16-2a"}>{t}</SheetTab>
        ))}
        <SheetTab $w={38} aria-label="Add sheet"><Svg w={11} h={11} s="#444" sw={1.8}><path d="M5.5 0 V11 M0 5.5 H11" /></Svg></SheetTab>
      </SheetTabs>
      <StatusBar>
        <StatusText>
          <span>Ready</span>
          <StatusItem><FigureI />Accessibility: Investigate</StatusItem>
        </StatusText>
        <Spacer />
        <ViewButton $on aria-label="Normal view"><Svg w={14} h={14}><path d="M.7 .7 H13.3 V13.3 H.7 Z M5 .7 V13.3 M9 .7 V13.3 M.7 5 H13.3 M.7 9 H13.3" /></Svg></ViewButton>
        <ViewButton aria-label="Page layout view"><Svg w={14} h={13}><path d="M.7 .7 H13.3 V12.3 H.7 Z M3.5 3 H10.5 V10 H3.5 Z M5 5 H9 M5 6.6 H9 M5 8.2 H9" /></Svg></ViewButton>
        <ViewButton aria-label="Page break view"><Svg w={14} h={13}><path d="M.7 .7 H13.3 V12.3 H.7 Z M.7 7.5 H9 V.7 M5 .7 V7.5" /></Svg></ViewButton>
        <ZoomButton aria-label="Zoom out"><Svg w={8} h={2} s="#555" sw={2}><path d="M0 1 H8" /></Svg></ZoomButton>
        <Zoom type="range" aria-label="Zoom" min="0" max="100" defaultValue="55" />
        <ZoomButton aria-label="Zoom in"><Svg w={8} h={8} s="#555" sw={2}><path d="M0 4 H8 M4 0 V8" /></Svg></ZoomButton>
        <ZoomValue>132%</ZoomValue>
      </StatusBar>
    </Window>
  );
}
